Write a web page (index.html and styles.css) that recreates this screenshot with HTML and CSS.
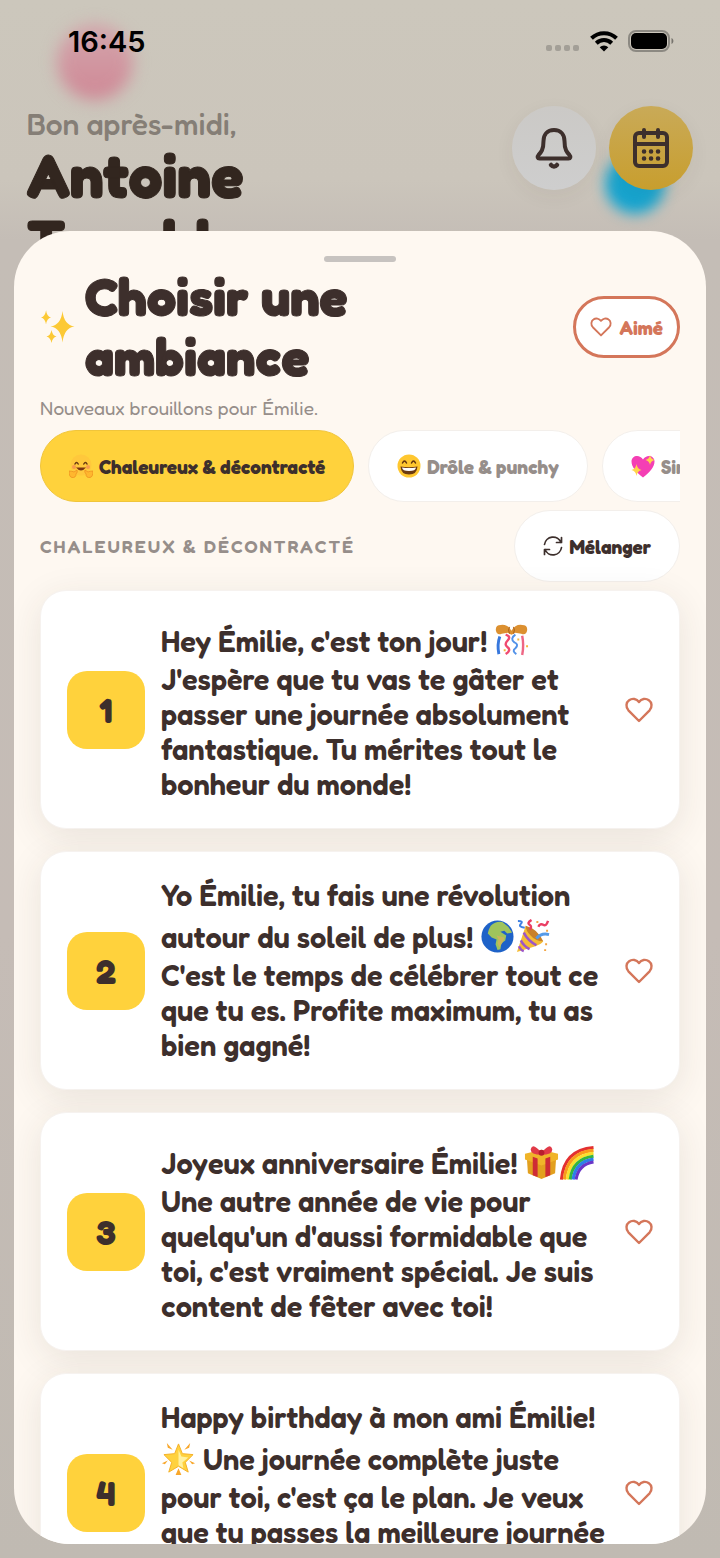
FILE: index.html
```html
<!DOCTYPE html>
<html lang="fr">
<head>
<meta charset="UTF-8" />
<meta name="viewport" content="width=device-width, initial-scale=1" />
<title>Choisir une ambiance</title>
<link rel="stylesheet" href="styles.css">
</head>
<body>
<!-- Shared icons -->
<svg class="sprite" aria-hidden="true">
  <symbol id="heart" viewBox="0 0 28 26"><path d="M14 24 3.400 13.300C.5 10.200 1 5.500 4.100 3.300 7.300.9 11.600 1.700 14 5c2.400-3.300 6.700-4.100 9.900-1.700 3.100 2.200 3.600 6.900.7 10z" fill="none" stroke="currentColor" stroke-width="2.400" stroke-linejoin="round"/></symbol>
</svg>

<div class="screen">
  <div class="status-bar">
    <span class="blob blob-pink"></span>
    <time class="clock">16:45</time>
    <div class="status-icons">
      <svg width="34" height="8" viewBox="0 0 34 8" fill="#a39f97"><rect x="0" y="1" width="6" height="6" rx="2"/><rect x="9" y="1" width="6" height="6" rx="2"/><rect x="18" y="1" width="6" height="6" rx="2"/><rect x="27" y="1" width="6" height="6" rx="2"/></svg>
      <svg class="wifi" width="28" height="22" viewBox="0 0 28 22" fill="none" stroke="#000" stroke-width="4"><path d="M1.500 8.200a18 18 0 0 1 25 0"/><path d="M6.300 13.200a11 11 0 0 1 15.400 0"/><path d="M14 21.500 9.700 17.200a6.200 6.200 0 0 1 8.600 0z" fill="#000" stroke="none"/></svg>
      <svg width="46" height="22" viewBox="0 0 46 22"><rect x="1" y="1" width="40" height="20" rx="7" fill="none" stroke="#8c8982" stroke-width="2"/><rect x="3" y="3" width="36" height="16" rx="5" fill="#000"/><path d="M43.500 8c2.500 1 2.500 5 0 6z" fill="#76736d"/></svg>
    </div>
  </div>

  <header class="home-header">
    <div>
      <p class="greeting">Bon après-midi,</p>
      <h1 class="user-name">Antoine<br>Tremblay</h1>
    </div>
    <div class="header-actions">
      <span class="blob blob-blue"></span>
      <button type="button" class="round-btn" aria-label="Notifications">
        <svg width="38" height="42" viewBox="0 0 38 42" fill="none" stroke="#3d2f2c" stroke-width="4" stroke-linecap="round" stroke-linejoin="round"><path d="M19 3C12 3 8.500 8 8.500 14c0 9-2.500 11.500-5 14-1.500 1.700-1 3.500 1 3.500h29c2 0 2.500-1.800 1-3.500-2.500-2.500-5-5-5-14C29.500 8 26 3 19 3z"/><path d="M16 38c1.500 2 4.500 2 6 0" stroke-width="4.500"/></svg>
      </button>
      <button type="button" class="round-btn round-btn-yellow" aria-label="Calendrier">
        <svg width="38" height="42" viewBox="0 0 38 42" fill="none" stroke="#3d2f2c" stroke-width="4" stroke-linecap="round"><rect x="3" y="6" width="32" height="33" rx="4"/><path d="M3 17h32M12 3v7M26 3v7"/><path d="M12 24.500h.1M19 24.500h.1M26 24.500h.1M12 31.500h.1M19 31.500h.1M26 31.500h.1" stroke-width="4.500"/></svg>
      </button>
    </div>
  </header>
</div>

<section class="sheet" aria-labelledby="sheet-title">
  <div class="handle"></div>
  <div class="sheet-header">
    <svg class="sparkles" width="34" height="34" viewBox="0 0 34 34" fill="#fcc935"><path d="M21.500 1Q23 15 33.500 16.500 23 18 21.500 32.500 20 18 9.500 16.500 20 15 21.500 1zM5 0q.8 6.500 5 7.500-4.200 1-5 7-.8-6-5-7 4.200-1 5-7zM10.500 20q.9 5.500 5 6.500-4.100 1-5 6.500-.9-5.500-5-6.500 4.100-1 5-6.500z"/></svg>
    <h2 class="sheet-title" id="sheet-title">Choisir une<br>ambiance</h2>
    <button type="button" class="liked-btn"><svg width="22" height="20"><use href="#heart"/></svg>Aimé</button>
  </div>
  <p class="subtitle">Nouveaux brouillons pour Émilie.</p>

  <div class="moods">
    <button type="button" class="chip chip-active">
      <svg width="24" height="24" viewBox="0 0 24 24"><circle cx="12" cy="11" r="10.500" fill="#ffc83c"/><path d="M6 10q1.500-3 3.200 0M14.800 10q1.700-3 3.200 0" fill="none" stroke="#6b3a12" stroke-width="1.500" stroke-linecap="round"/><path d="M7 13.500q5 6 10 0z" fill="#7a3412"/><circle cx="5" cy="13" r="2" fill="#f89a4b"/><circle cx="19" cy="13" r="2" fill="#f89a4b"/><path d="M0 17q3 0 5 1l3-2q1 2-1 4 0 4-4 3.500Q0 23 0 17zm24 0q-3 0-5 1l-3-2q-1 2 1 4 0 4 4 3.500 3-.5 3-6.500z" fill="#ffb72e" stroke="#ec8b20" stroke-width=".7"/></svg>
      Chaleureux &amp; décontracté
    </button>
    <button type="button" class="chip">
      <svg width="24" height="24" viewBox="0 0 24 24"><circle cx="12" cy="12" r="11.500" fill="#ffc72f"/><path d="M5.500 9q2-4 4 0M14.500 9q2-4 4 0" fill="none" stroke="#62340f" stroke-width="1.500" stroke-linecap="round"/><path d="M3.500 12.500q8.500 1.500 17 0-.5 8-8.500 8t-8.500-8z" fill="#6b3a12"/><path d="M5 13.500q7 1 14 0-.3 3.500-7 3.500t-7-3.500z" fill="#fff"/></svg>
      Drôle &amp; punchy
    </button>
    <button type="button" class="chip">
      <svg width="24" height="24" viewBox="0 0 24 24"><path d="M12 23.500C5 18 .5 13 .5 7.500.5 1 9 0 12 5.500 15 0 23.500 1 23.500 7.500 23.500 13 19 18 12 23.500z" fill="#f43fb4"/><path d="M19 1q.6 4 4.500 5-3.900 1-4.500 5-.6-4-4.500-5Q18.400 5 19 1zM5.500 10q.7 5 5 6-4.300 1-5 6-.7-5-5-6 4.300-1 5-6z" fill="#ffd54a"/></svg>
      Sincère
    </button>
  </div>

  <div class="section-row">
    <h3 class="section-label">Chaleureux &amp; décontracté</h3>
    <button type="button" class="chip shuffle-btn">
      <svg width="20" height="20" viewBox="0 0 20 20" fill="none" stroke="#3d2f2c" stroke-width="1.700" stroke-linecap="round" stroke-linejoin="round"><path d="M1.500 8.500A8.600 8.600 0 0 1 18 6.500M18.500 11.500A8.600 8.600 0 0 1 2 13.500M18.500 1.500v5h-5M1.500 18.500v-5h5"/></svg>
      Mélanger
    </button>
  </div>

  <ol class="messages">
    <li class="card">
      <span class="number">1</span>
      <p class="message">Hey Émilie, c'est ton jour! <svg class="emoji" role="img" aria-label="Confettis" viewBox="0 0 36 36"><path d="M2 8Q1 2 7 2q7-1 11 6 4-7 11-6 6 0 5 6-1 5-6 3l-6-1-4 2-4-2-6 1q-5 2-6-3z" fill="#dc9030"/><path d="M16 4q-2 3 0 7M20 4q2 3 0 7" stroke="#a85f1a" fill="none"/><path d="M6 14Q3 22 5 32" stroke="#3878dd" stroke-width="3" fill="none"/><path d="M29 13q2 10 0 20" stroke="#ee6684" stroke-width="2.500" fill="none"/><path d="M12 12q6 2 2 6t0 7-2 7" stroke="#f04a70" stroke-width="2.500" fill="none"/><path d="M22 12q-6 4-1 8 5 2 1 6-4 3 1 6" stroke="#5292e8" stroke-width="2" fill="none"/><path d="M10 27h2v2h-2zM24 16h2v2h-2zM33 23h2v2h-2z" fill="#f6b43c"/></svg><br>J'espère que tu vas te gâter et<br>passer une journée absolument<br>fantastique. Tu mérites tout le<br>bonheur du monde!</p>
      <button type="button" class="like-btn" aria-label="Aimer le message 1"><svg width="28" height="26"><use href="#heart"/></svg></button>
    </li>
    <li class="card">
      <span class="number">2</span>
      <p class="message">Yo Émilie, tu fais une révolution<br>autour du soleil de plus! <svg class="emoji" role="img" aria-label="Terre" viewBox="0 0 36 36"><circle cx="18" cy="18" r="16.500" fill="#1e62c8"/><path d="M11 7q5-5 12-4l6 5 4 6-5 1-3-3-4 1 6 4-1 5-4 3-1 6-3 1-2-6 1-5-5-2-4-4 1-4z" fill="#9fc45c"/><path d="M17 17l8 2-1 4-4 6-2-4 1-4z" fill="#c9b65c"/></svg><svg class="emoji" role="img" aria-label="Cotillons" viewBox="0 0 36 36"><path d="M2 34 11 7q2 3 8 8t10 8q-2 3-8 5z" fill="#f5bc35"/><path d="M9 14q4 8 13 13M6 22q3 6 9 9M4 28q2 4 5 5" stroke="#9c55c8" stroke-width="2.500" fill="none"/><path d="M11 7q12 3 18 16-8 0-13-6-5-5-5-10z" fill="#c9812a"/><path d="M3 2q6 0 3 3t4 4" stroke="#3f80e2" stroke-width="2" fill="none"/><path d="M15 11q3-3 0-5t2-5M24 8q2-4 5-2t5-4" stroke="#ea3e63" stroke-width="2.500" fill="none"/><path d="M22 20q5-6 13-4" stroke="#559ae8" stroke-width="3" fill="none"/><path d="M22 2h2v2h-2zM32 11h2v2h-2zM31 25h2v2h-2zM30 31h2v2h-2z" fill="#f2a543"/></svg><br>C'est le temps de célébrer tout ce<br>que tu es. Profite maximum, tu as<br>bien gagné!</p>
      <button type="button" class="like-btn" aria-label="Aimer le message 2"><svg width="28" height="26"><use href="#heart"/></svg></button>
    </li>
    <li class="card">
      <span class="number">3</span>
      <p class="message">Joyeux anniversaire Émilie! <svg class="emoji" role="img" aria-label="Cadeau" viewBox="0 0 36 36"><path d="M3 14l15 5v16L4 29zM33 14l-15 5v16l14-6z" fill="#e2a01f"/><path d="M1 9l17-4 17 4v6l-17 6L1 15z" fill="#f0b429"/><path d="M9 12l5 2v19l-5-2zM27 12l-5 2v19l5-2z" fill="#ce2c35"/><path d="M18 8Q9-3 7 4q-1 6 11 6 12 0 11-6-2-7-11 4z" fill="#e13a48"/><circle cx="18" cy="8" r="3" fill="#b81f2e"/></svg><svg class="emoji" role="img" aria-label="Arc-en-ciel" viewBox="0 0 36 36" fill="none" stroke-width="3.200"><path d="M2.500 35.500Q5 5 35.500 2.500" stroke="#e33030"/><path d="M5.500 35.500Q8 8 35.500 5.500" stroke="#f99b1c"/><path d="M8.500 35.500Q11 11 35.500 8.500" stroke="#f9e02e"/><path d="M11.500 35.500Q14 14 35.500 11.500" stroke="#35b63c"/><path d="M14.500 35.500Q17 17 35.500 14.500" stroke="#2d7fe8"/><path d="M17.500 35.500Q20 20 35.500 17.500" stroke="#6a35c8"/></svg><br>Une autre année de vie pour<br>quelqu'un d'aussi formidable que<br>toi, c'est vraiment spécial. Je suis<br>content de fêter avec toi!</p>
      <button type="button" class="like-btn" aria-label="Aimer le message 3"><svg width="28" height="26"><use href="#heart"/></svg></button>
    </li>
    <li class="card">
      <span class="number">4</span>
      <p class="message">Happy birthday à mon ami Émilie!<br><svg class="emoji" role="img" aria-label="Étoile brillante" viewBox="0 0 36 36"><path d="M18 3l4 10 11 1-8 8 3 10-10-6-10 6 3-10-8-8 11-1z" fill="#ffd23e" stroke="#f5af25" stroke-linejoin="round"/><path d="M18 9l3 7 7 1-6 5 1 6-5-3z" fill="#fff1a0"/><path d="M6 2l6 7-5-2zM30 2l-6 7 5-2zM1 23l6-3-3 4zM35 23l-6-3 3 4zM18 28l3 7h-6z" fill="#f8a72b"/></svg> Une journée complète juste<br>pour toi, c'est ça le plan. Je veux<br>que tu passes la meilleure journée<br>de ta vie!</p>
      <button type="button" class="like-btn" aria-label="Aimer le message 4"><svg width="28" height="26"><use href="#heart"/></svg></button>
    </li>
  </ol>
</section>
</body>
</html>
```

FILE: styles.css
```css
:root {
  --yellow: #ffd23c;
  --coral: #d4765a;
  --brown: #3d2f2c;
  --muted: #968e8a;
  --sheet: #fef8f1;
  --font-family: "Fredoka", Lato, "Open Sans", sans-serif;
}

* {
  box-sizing: border-box;
}

body {
  margin: 0;
  height: 100vh;
  overflow: hidden;
  position: relative;
  font-family: var(--font-family);
  color: var(--brown);
  background: linear-gradient(#ccc7bc 0, #cbc5bb 180px, #c4bdb6 240px, #c5bcb6 60%, #c0bab2);
}

h1, h2, h3, p, ol {
  margin: 0;
  padding: 0;
}

button {
  font-family: inherit;
  color: inherit;
  border: none;
  padding: 0;
  cursor: pointer;
}

svg {
  flex-shrink: 0;
}

.sprite {
  position: absolute;
  width: 0;
  height: 0;
}

.status-bar {
  position: relative;
  display: flex;
  justify-content: space-between;
  align-items: center;
  height: 82px;
  padding: 0 46px 0 68px;
}

.clock {
  position: relative;
  font-family: Inter, sans-serif;
  font-size: 29px;
  font-weight: 600;
  color: #000;
}

.status-icons {
  display: flex;
  align-items: center;
  gap: 10px;
}

.status-icons svg:first-child {
  margin-top: 14px;
}

.blob {
  position: absolute;
  border-radius: 50%;
}

.blob-pink {
  left: 57px;
  top: 24px;
  width: 76px;
  height: 76px;
  background: linear-gradient(#d3a6ac, #cf8795);
  filter: blur(8px);
}

.blob-blue {
  right: 28px;
  bottom: -24px;
  width: 60px;
  height: 60px;
  background: #16a4cf;
  filter: blur(7px);
}

.home-header {
  display: flex;
  justify-content: space-between;
  align-items: flex-start;
  padding: 24px 27px 0;
}

.greeting {
  font-size: 30px;
  font-weight: 500;
  line-height: 36px;
  color: #857e76;
}

.user-name {
  font-size: 60px;
  font-weight: 900;
  line-height: 66px;
  color: #32261f;
  -webkit-text-stroke: 1px;
}

.header-actions {
  position: relative;
  display: flex;
  gap: 13px;
}

.round-btn {
  position: relative;
  display: grid;
  place-items: center;
  width: 84px;
  height: 84px;
  border-radius: 50%;
  background: linear-gradient(#cbc9c6, #cecece);
  box-shadow: 0 6px 20px rgb(60 46 42 / 0.06);
}

.round-btn-yellow {
  background: linear-gradient(#c9aa58, #c89e2e);
}

.sheet {
  position: absolute;
  inset: 231px 14px 14px;
  display: flex;
  flex-direction: column;
  padding: 25px 26px 0;
  overflow: hidden;
  border-radius: 56px;
  background: var(--sheet);
}

.handle {
  flex-shrink: 0;
  align-self: center;
  width: 72px;
  height: 6px;
  border-radius: 3px;
  background: #c7c3c0;
}

.sheet-header {
  display: flex;
  align-items: center;
  padding-top: 5px;
}

.sparkles {
  margin: 0 10px 0 1px;
}

.sheet-title {
  flex: 1;
  font-size: 52px;
  font-weight: 900;
  line-height: 60px;
  -webkit-text-stroke: 1px;
}

.liked-btn {
  display: flex;
  align-items: center;
  gap: 8px;
  height: 62px;
  padding: 0 14px;
  border: 3px solid var(--coral);
  border-radius: 31px;
  background: #fff;
  color: var(--coral);
  font-size: 19px;
  font-weight: 900;
}

.subtitle {
  padding: 8px 0 9px;
  font-size: 19px;
  line-height: 26px;
  color: var(--muted);
}

.moods {
  display: flex;
  flex-shrink: 0;
  gap: 14px;
  overflow: hidden;
}

.chip {
  display: flex;
  flex-shrink: 0;
  align-items: center;
  gap: 6px;
  height: 72px;
  padding: 0 28px;
  border: 1px solid #f3efeb;
  border-radius: 36px;
  background: #fff;
  color: var(--muted);
  font-size: 19px;
  font-weight: 900;
}

.chip-active {
  border-color: #f0c53b;
  background: var(--yellow);
  color: var(--brown);
}

.section-row {
  display: flex;
  justify-content: space-between;
  align-items: center;
  padding: 8px 0;
}

.section-label {
  font-size: 18px;
  font-weight: 600;
  letter-spacing: 2px;
  text-transform: uppercase;
  color: var(--muted);
}

.shuffle-btn {
  color: var(--brown);
}

.messages {
  display: flex;
  flex-direction: column;
  gap: 22px;
  list-style: none;
}

.card {
  display: flex;
  align-items: center;
  padding: 26px;
  border: 1px solid #f6f2ef;
  border-radius: 26px;
  background: #fff;
  box-shadow: 0 8px 36px rgb(60 46 42 / 0.1);
}

.number {
  display: grid;
  flex-shrink: 0;
  place-items: center;
  width: 78px;
  height: 78px;
  margin-right: 16px;
  border-radius: 20px;
  background: var(--yellow);
  font-size: 35px;
  font-weight: 900;
}

.message {
  flex: 1;
  font-size: 29px;
  font-weight: 600;
  line-height: 35px;
  white-space: nowrap;
}

.emoji {
  width: 35px;
  height: 35px;
  margin: 6px 0 4px;
  vertical-align: -10px;
}

.like-btn {
  display: flex;
  background: none;
  color: var(--coral);
}
```
